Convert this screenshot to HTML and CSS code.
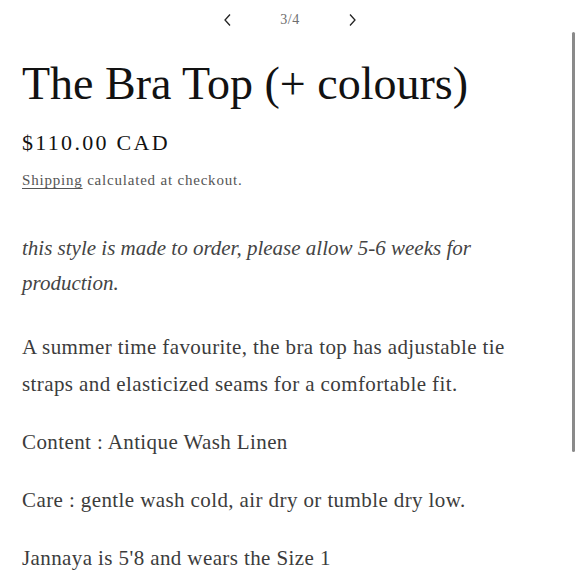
FILE: index.html
```html
<!DOCTYPE html>
<html lang="en">
<head>
<meta charset="utf-8">
<title>The Bra Top (+ colours)</title>
<link rel="stylesheet" href="styles.css">
</head>
<body>
<div class="page">
  <nav class="slider-nav">
    <button class="arrow" aria-label="Previous">
      <svg width="12" height="14" viewBox="0 0 12 14"><polyline points="8,1.5 3,7 8,12.5" fill="none" stroke="#222" stroke-width="1.3"/></svg>
    </button>
    <span class="counter">3/4</span>
    <button class="arrow" aria-label="Next">
      <svg width="12" height="14" viewBox="0 0 12 14"><polyline points="4,1.5 9,7 4,12.5" fill="none" stroke="#222" stroke-width="1.3"/></svg>
    </button>
  </nav>
  <h1 class="title">The Bra Top (+ colours)</h1>
  <div class="price">$110.00 CAD</div>
  <div class="tax"><a href="#" class="ship">Shipping</a> calculated at checkout.</div>
  <div class="desc">
    <p class="note">this style is made to order, please allow 5-6 weeks for production.</p>
    <p>A summer time favourite, the bra top has adjustable tie straps and elasticized seams for a comfortable fit.</p>
    <p>Content : Antique Wash Linen</p>
    <p>Care : gentle wash cold, air dry or tumble dry low.</p>
    <p>Jannaya is 5'8 and wears the Size 1</p>
  </div>
</div>
<div class="scroll-thumb"></div>
</body>
</html>
```
FILE: styles.css
```css
html, body {
  margin: 0;
  padding: 0;
  background: #ffffff;
}
body {
  font-family: "Liberation Serif", "Times New Roman", serif;
  color: #121212;
  overflow: hidden;
}
.page {
  padding: 0 0 0 22px;
  width: 532px;
}
.slider-nav {
  display: flex;
  justify-content: center;
  align-items: center;
  gap: 44px;
  height: 40px;
  margin-left: -22px;
  width: 580px;
}
.arrow {
  border: 0;
  background: none;
  padding: 0;
  width: 16px;
  height: 20px;
  display: flex;
  align-items: center;
  justify-content: center;
}
.counter {
  font-size: 14px;
  color: #6e6e6e;
  letter-spacing: 0.5px;
}
.title {
  font-weight: 400;
  font-size: 46px;
  line-height: 1.2;
  margin: 16px 0 0 0;
  letter-spacing: 0;
}
.price {
  font-size: 22px;
  letter-spacing: 2.3px;
  margin-top: 19px;
  line-height: 26px;
}
.tax {
  font-size: 15px;
  color: #555;
  letter-spacing: 0.8px;
  margin-top: 14px;
  line-height: 20px;
}
.ship {
  color: #555;
  text-decoration: underline;
  text-underline-offset: 3px;
}
.desc {
  margin-top: 41px;
  color: #3c3c3c;
  font-size: 21px;
  letter-spacing: 0.4px;
  line-height: 37px;
}
.desc p {
  margin: 0 0 21px 0;
}
.desc .note {
  font-style: italic;
  line-height: 35px;
  letter-spacing: 0;
  margin-bottom: 28px;
  color: #444;
  max-width: 460px;
}
.scroll-thumb {
  position: absolute;
  left: 572px;
  top: 32px;
  width: 3px;
  height: 420px;
  background: #8a8a8a;
  border-radius: 2px;
}
```
